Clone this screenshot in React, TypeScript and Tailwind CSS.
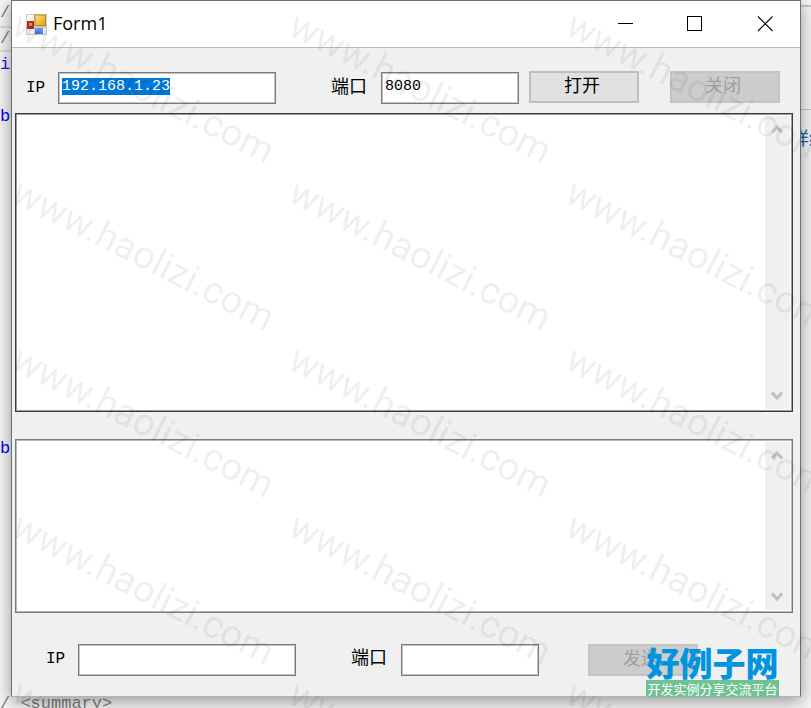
import React, { useEffect, useRef, useState } from 'react';

const WATERMARKS = Array.from({ length: 15 }, (_, i) => i);

interface FieldProps {
  id: string;
  label: string;
  value: string;
  onChange: (value: string) => void;
  className: string;
  labelClassName: string;
  inputRef?: React.Ref<HTMLInputElement>;
}

function Field({ id, label, value, onChange, className, labelClassName, inputRef }: FieldProps) {
  return (
    <>
      <label htmlFor={id} className={`shrink-0 leading-6 text-black ${labelClassName}`}>
        {label}
      </label>
      <input
        id={id}
        ref={inputRef}
        value={value}
        spellCheck={false}
        autoComplete="off"
        onChange={(e) => onChange(e.target.value)}
        className={`h-8 shrink-0 border border-[#7a7a7a] bg-white px-[3px] pb-[2px] text-[15px] leading-[18px] text-black inset-shadow-[0_0_0_1px_#c4c4c4] outline-none selection:bg-[#0078d7] selection:text-white ${className}`}
      />
    </>
  );
}

function ScrollBar() {
  return (
    <div className="mr-[2px] flex w-[25px] shrink-0 flex-col justify-between bg-[#f0f0f0] pr-[2px]">
      <button type="button" aria-label="Scroll up" className="flex h-[26px] items-center justify-center">
        <svg width="12" height="10" viewBox="0 0 12 10" fill="none" stroke="#bfbfbf" strokeWidth="3">
          <path d="M1 8.500l5-5.500 5 5.500" />
        </svg>
      </button>
      <button type="button" aria-label="Scroll down" className="flex h-[26px] items-center justify-center">
        <svg width="12" height="10" viewBox="0 0 12 10" fill="none" stroke="#bfbfbf" strokeWidth="3">
          <path d="M1 1.500l5 5.500 5-5.500" />
        </svg>
      </button>
    </div>
  );
}

function FormIcon() {
  return (
    <svg width="21" height="21" viewBox="0 0 21 21" className="shrink-0">
      <defs>
        <linearGradient id="gold" x1="0" y1="0" x2="1" y2="1">
          <stop offset="0" stopColor="#ffe58a" />
          <stop offset="1" stopColor="#e0a000" />
        </linearGradient>
        <linearGradient id="blue" x1="0" y1="0" x2="0" y2="1">
          <stop offset="0" stopColor="#7ba8ee" />
          <stop offset="1" stopColor="#3a6fd0" />
        </linearGradient>
      </defs>
      <rect x="0" y="0" width="21" height="21" fill="#c9c9c9" />
      <rect x="1" y="1" width="7" height="6" fill="#f6f6f6" />
      <rect x="1" y="15" width="7" height="5" fill="#f0f0f0" />
      <rect x="17" y="14" width="3" height="6" fill="#f0f0f0" />
      <rect x="9" y="1" width="10.500" height="10.500" fill="url(#gold)" stroke="#b98a1c" />
      <rect x="1" y="7" width="7" height="8" fill="#b82d1c" />
      <rect x="3" y="9" width="3" height="3" fill="#e88d7c" />
      <rect x="9" y="14" width="8" height="6" fill="url(#blue)" />
    </svg>
  );
}

// Code editor that stays visible around the edges of the form
function EditorBackdrop() {
  return (
    <div className="absolute inset-0 flex justify-between overflow-hidden bg-[#f5f5f5] text-[17px] leading-[26px]">
      <div className="flex flex-col">
        <div className="h-[26px] shrink-0 text-[#808080]">/</div>
        <div className="h-[26px] shrink-0 border-y-2 border-[#dedede] leading-[22px] text-[#808080]">/</div>
        <div className="h-[26px] shrink-0 text-[#3512d8]">i</div>
        <div className="h-[26px] shrink-0" />
        <div className="mb-[306px] h-[26px] shrink-0 text-[#0000ff]">b</div>
        <div className="mb-[229px] h-[26px] shrink-0 text-[#0000ff]">b</div>
        <div className="h-[26px] shrink-0 whitespace-pre text-[#808080]">/ &lt;summary&gt;</div>
      </div>
      <div className="w-3 overflow-hidden pt-[5px]">
        <div className="h-[105px] border-t-2 border-b border-[#c8c8b4]" />
        <div className="flex h-[60px] items-center whitespace-nowrap text-[18px] text-[#1467b0]">
          <span className="-ml-2">详细</span>
        </div>
      </div>
    </div>
  );
}

function Watermark() {
  return (
    <div
      aria-hidden="true"
      className="pointer-events-none absolute inset-0 z-20 overflow-hidden pl-[6px] select-none"
    >
      <div className="grid w-[831px] grid-cols-[277px_277px_277px] auto-rows-[167px]">
        {WATERMARKS.map((n) => (
          <span
            key={n}
            className="block h-10 w-0 origin-bottom-left rotate-27 font-[Roboto,sans-serif] text-[38px] leading-10 whitespace-nowrap text-black/8"
          >
            www.haolizi.com
          </span>
        ))}
      </div>
    </div>
  );
}

export default function App() {
  const [ip, setIp] = useState('192.168.1.23');
  const [port, setPort] = useState('8080');
  const [targetIp, setTargetIp] = useState('');
  const [targetPort, setTargetPort] = useState('');
  const [received, setReceived] = useState('');
  const [message, setMessage] = useState('');
  const ipRef = useRef<HTMLInputElement>(null);

  // First field starts focused with its text selected
  useEffect(() => {
    ipRef.current?.focus();
    ipRef.current?.select();
  }, []);

  return (
    <div className="relative h-screen min-h-[708px] overflow-hidden pr-[10px] pl-[11px] font-['Liberation_Mono','Noto_Sans_CJK_SC',monospace]">
      <EditorBackdrop />

      <main className="relative border border-[#6e6e6e] border-b-[#b4b4b4] bg-[#f0f0f0] shadow-[0_4px_16px_rgba(0,0,0,0.4)]">
        <header className="flex h-[47px] items-center border-b border-[#bcbcbc] bg-white pl-[14px]">
          <FormIcon />
          <h1 className="ml-[6px] flex-1 pb-[2px] font-['Open_Sans',sans-serif] text-[18px] leading-6 text-black">Form1</h1>
          <button type="button" aria-label="Minimize" className="flex h-full w-[70px] items-center justify-center">
            <svg width="16" height="16" viewBox="0 0 16 16" stroke="#000" fill="none" shapeRendering="crispEdges">
              <path d="M1 7.500h15" />
            </svg>
          </button>
          <button type="button" aria-label="Maximize" className="flex h-full w-[70px] items-center justify-center">
            <svg width="16" height="16" viewBox="0 0 16 16" stroke="#000" fill="none" shapeRendering="crispEdges">
              <path d="M.5.5h14v14H.5z" />
            </svg>
          </button>
          <button type="button" aria-label="Close" className="flex h-full w-[70px] items-center justify-center">
            <svg width="16" height="16" viewBox="0 0 16 16" stroke="#000" strokeWidth="1.1" fill="none">
              <path d="M1 .5l14.500 14.500M15.500.5L1 15" />
            </svg>
          </button>
        </header>

        <div className="flex h-[65px] items-center pt-[14px] pr-5 pl-[14px]">
          <Field
            id="ip"
            label="IP"
            value={ip}
            onChange={setIp}
            inputRef={ipRef}
            className="w-[218px]"
            labelClassName="w-8 text-[16px]"
          />
          <div className="w-[55px] shrink" />
          <Field
            id="port"
            label="端口"
            value={port}
            onChange={setPort}
            className="w-[138px]"
            labelClassName="w-[50px] text-[18px]"
          />
          <button
            type="button"
            className="mb-[2px] ml-[10px] h-8 w-[110px] shrink-0 border-2 border-[#bebebe] bg-[#e1e1e1] pr-1 text-[18px] leading-6 text-black"
          >
            打开
          </button>
          <button
            type="button"
            disabled
            className="mb-[2px] ml-auto h-8 w-[110px] shrink-0 border-2 border-[#c4c4c4] bg-[#cccccc] pr-1 text-[18px] leading-6 text-[#a0a0a0]"
          >
            关闭
          </button>
        </div>

        <section className="mr-[7px] ml-[3px] flex h-[299px] border border-[#3c3c3c] bg-white py-[2px] inset-shadow-[0_0_0_1px_#9a9a9a]">
          <textarea
            aria-label="Received"
            value={received}
            onChange={(e) => setReceived(e.target.value)}
            className="min-w-0 flex-1 resize-none p-1 text-[15px] outline-none"
          />
          <ScrollBar />
        </section>

        <section className="mt-[27px] mr-[7px] ml-[3px] flex h-[174px] border border-[#7a7a7a] bg-white py-[2px] inset-shadow-[0_0_0_1px_#b8b8b8]">
          <textarea
            aria-label="Message"
            value={message}
            onChange={(e) => setMessage(e.target.value)}
            className="min-w-0 flex-1 resize-none p-1 text-[15px] outline-none"
          />
          <ScrollBar />
        </section>

        <div className="flex h-[83px] items-center pt-[11px] pl-[34px]">
          <Field
            id="target-ip"
            label="IP"
            value={targetIp}
            onChange={setTargetIp}
            className="w-[218px]"
            labelClassName="w-8 pb-[2px] text-[16px]"
          />
          <div className="w-[55px] shrink" />
          <Field
            id="target-port"
            label="端口"
            value={targetPort}
            onChange={setTargetPort}
            className="w-[138px]"
            labelClassName="w-[50px] pb-[2px] text-[18px]"
          />
          <button
            type="button"
            disabled
            className="ml-[49px] h-8 w-[110px] shrink-0 border-2 border-[#c4c4c4] bg-[#cccccc] pr-1 text-[18px] leading-6 text-[#a0a0a0]"
          >
            发送
          </button>
        </div>
      </main>

      <Watermark />

      {/* Site badge */}
      <div className="absolute right-[32px] bottom-[11px] z-30 w-[133px] text-center font-['Noto_Sans_CJK_SC',sans-serif] whitespace-nowrap">
        <div className="h-[35px] text-[33px] leading-[35px] font-black text-[#0093e0]">好例子网</div>
        <div className="h-[17px] bg-[#6fc393] text-[13px] leading-[17px] text-white">开发实例分享交流平台</div>
      </div>
    </div>
  );
}
